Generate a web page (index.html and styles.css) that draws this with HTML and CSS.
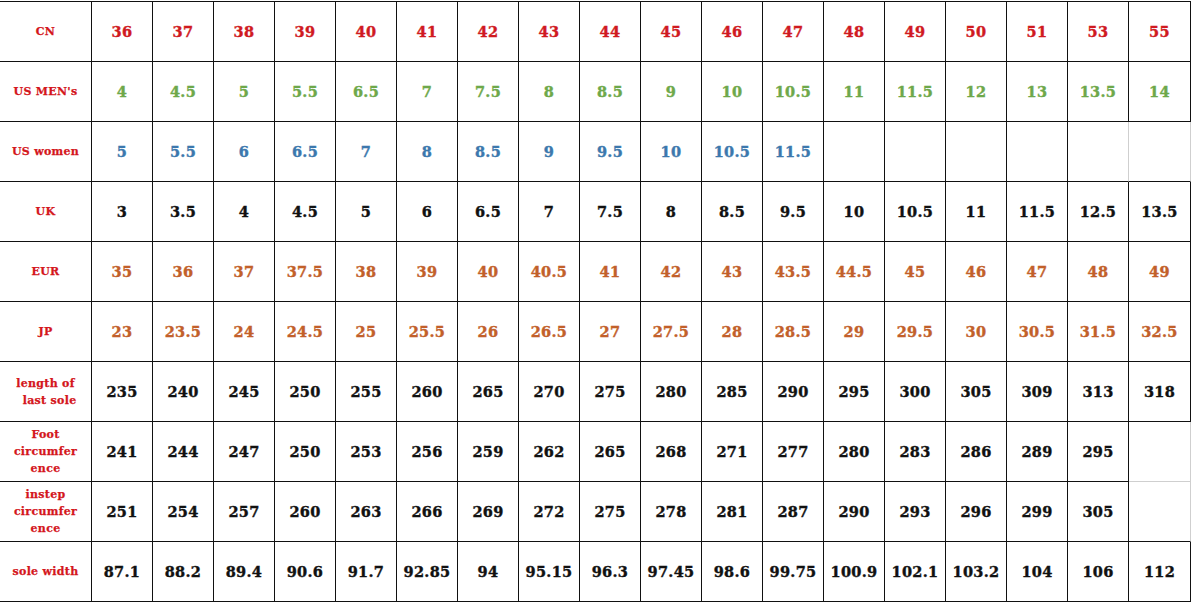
FILE: index.html
```html
<!DOCTYPE html>
<html>
<head>
<meta charset="utf-8">
<link rel="stylesheet" href="styles.css">
</head>
<body>
<table class="size-chart">
  <colgroup>
    <col class="col-label">
    <col class="col-val"><col class="col-val"><col class="col-val"><col class="col-val"><col class="col-val"><col class="col-val">
    <col class="col-val"><col class="col-val"><col class="col-val"><col class="col-val"><col class="col-val"><col class="col-val">
    <col class="col-val"><col class="col-val"><col class="col-val"><col class="col-val"><col class="col-val"><col class="col-last">
  </colgroup>
  <tr class="row-red">
    <th>CN</th>
    <td>36</td><td>37</td><td>38</td><td>39</td><td>40</td><td>41</td><td>42</td><td>43</td><td>44</td><td>45</td><td>46</td><td>47</td><td>48</td><td>49</td><td>50</td><td>51</td><td>53</td><td>55</td>
  </tr>
  <tr class="row-green">
    <th>US MEN's</th>
    <td>4</td><td>4.5</td><td>5</td><td>5.5</td><td>6.5</td><td>7</td><td>7.5</td><td>8</td><td>8.5</td><td>9</td><td>10</td><td>10.5</td><td>11</td><td>11.5</td><td>12</td><td>13</td><td>13.5</td><td>14</td>
  </tr>
  <tr class="row-blue">
    <th>US women</th>
    <td>5</td><td>5.5</td><td>6</td><td>6.5</td><td>7</td><td>8</td><td>8.5</td><td>9</td><td>9.5</td><td>10</td><td>10.5</td><td>11.5</td><td></td><td></td><td></td><td></td><td class="gray-r"></td><td class="gray-r"></td>
  </tr>
  <tr class="row-black">
    <th>UK</th>
    <td>3</td><td>3.5</td><td>4</td><td>4.5</td><td>5</td><td>6</td><td>6.5</td><td>7</td><td>7.5</td><td>8</td><td>8.5</td><td>9.5</td><td>10</td><td>10.5</td><td>11</td><td>11.5</td><td>12.5</td><td>13.5</td>
  </tr>
  <tr class="row-orange">
    <th>EUR</th>
    <td>35</td><td>36</td><td>37</td><td>37.5</td><td>38</td><td>39</td><td>40</td><td>40.5</td><td>41</td><td>42</td><td>43</td><td>43.5</td><td>44.5</td><td>45</td><td>46</td><td>47</td><td>48</td><td>49</td>
  </tr>
  <tr class="row-orange">
    <th>JP</th>
    <td>23</td><td>23.5</td><td>24</td><td>24.5</td><td>25</td><td>25.5</td><td>26</td><td>26.5</td><td>27</td><td>27.5</td><td>28</td><td>28.5</td><td>29</td><td>29.5</td><td>30</td><td>30.5</td><td>31.5</td><td>32.5</td>
  </tr>
  <tr class="row-black">
    <th>length of<br>&nbsp;&nbsp;last sole</th>
    <td>235</td><td>240</td><td>245</td><td>250</td><td>255</td><td>260</td><td>265</td><td>270</td><td>275</td><td>280</td><td>285</td><td>290</td><td>295</td><td>300</td><td>305</td><td>309</td><td>313</td><td>318</td>
  </tr>
  <tr class="row-black">
    <th>Foot<br>circumfer<br>ence</th>
    <td>241</td><td>244</td><td>247</td><td>250</td><td>253</td><td>256</td><td>259</td><td>262</td><td>265</td><td>268</td><td>271</td><td>277</td><td>280</td><td>283</td><td>286</td><td>289</td><td>295</td><td class="gray-r gray-b"></td>
  </tr>
  <tr class="row-black">
    <th>instep<br>circumfer<br>ence</th>
    <td>251</td><td>254</td><td>257</td><td>260</td><td>263</td><td>266</td><td>269</td><td>272</td><td>275</td><td>278</td><td>281</td><td>287</td><td>290</td><td>293</td><td>296</td><td>299</td><td>305</td><td class="gray-r"></td>
  </tr>
  <tr class="row-black">
    <th>sole width</th>
    <td>87.1</td><td>88.2</td><td>89.4</td><td>90.6</td><td>91.7</td><td>92.85</td><td>94</td><td>95.15</td><td>96.3</td><td>97.45</td><td>98.6</td><td>99.75</td><td>100.9</td><td>102.1</td><td>103.2</td><td>104</td><td>106</td><td>112</td>
  </tr>
</table>
</body>
</html>
```

FILE: styles.css
```css
html, body {
  margin: 0;
  padding: 0;
  background: #ffffff;
}

.size-chart {
  margin-top: 1px;
  border-collapse: separate;
  border-spacing: 0;
  table-layout: fixed;
  width: 1191px;
  border-top: 1px solid #111;
  font-family: "DejaVu Serif", "Liberation Serif", serif;
  font-weight: bold;
}

.col-label { width: 92px; }
.col-val { width: 61px; }
.col-last { width: 62px; }

.size-chart th,
.size-chart td {
  height: 59px;
  padding: 0;
  text-align: center;
  vertical-align: middle;
  border-right: 1px solid #111;
  border-bottom: 1px solid #111;
  box-sizing: border-box;
}

.size-chart tr { height: 60px; }

.size-chart th {
  color: #d4161c;
  font-size: 11px;
  line-height: 17px;
  font-weight: bold;
  letter-spacing: 0.3px;
  -webkit-text-stroke: 0.25px currentColor;
}

.size-chart td {
  font-size: 14.5px;
  letter-spacing: 0.3px;
  -webkit-text-stroke: 0.4px currentColor;
}

.row-red td { color: #d01a1f; }
.row-green td { color: #6ea84a; }
.row-blue td { color: #3c78ad; }
.row-black td { color: #111111; }
.row-orange td { color: #c2602a; }

.size-chart td.gray-r { border-right-color: #cfcfcf; }
.size-chart td.gray-b { border-bottom-color: #cfcfcf; }
```
